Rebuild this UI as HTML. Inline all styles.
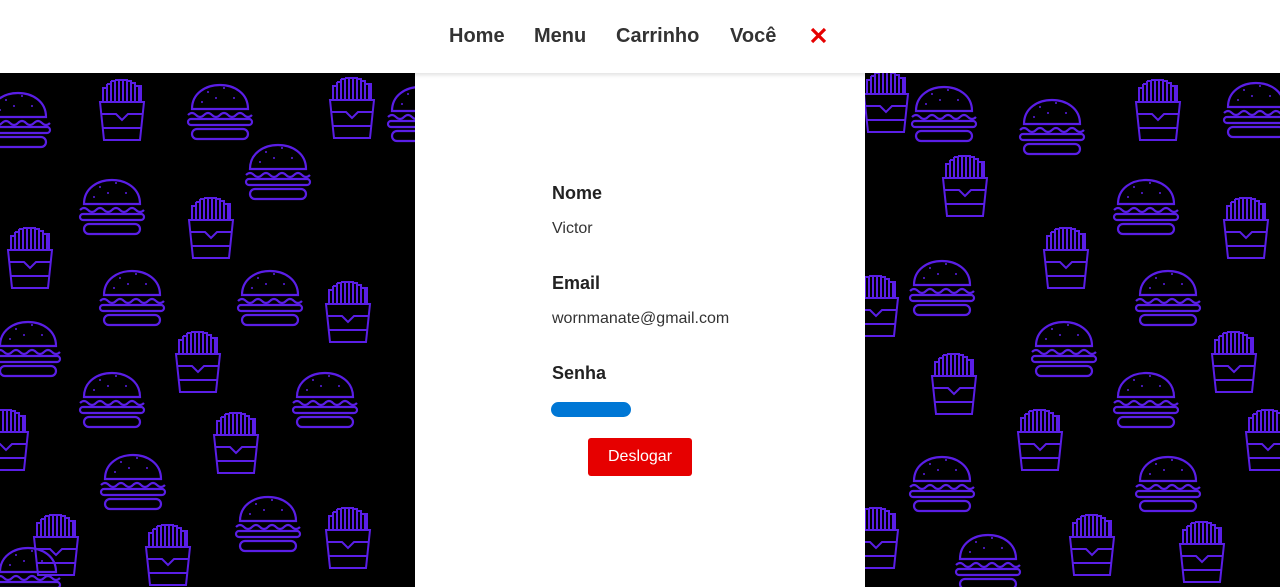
<!DOCTYPE html>
<html><head><meta charset="utf-8"><style>
*{margin:0;padding:0;box-sizing:border-box}
body{width:1280px;height:587px;overflow:hidden;background:#000;font-family:"Liberation Sans",Arial,sans-serif;position:relative}
nav{position:absolute;top:0;left:0;width:1280px;height:73px;background:#fff;box-shadow:0 2px 4px rgba(0,0,0,.12);z-index:2}
nav span{position:absolute;top:25px;font-size:20px;font-weight:bold;color:#333}
.bg{position:absolute;top:0;left:0}
.card{position:absolute;left:415px;top:73px;width:450px;height:514px;background:#fff;z-index:1}
h3{position:absolute;left:137px;font-size:18px;font-weight:bold;color:#222}
p{position:absolute;left:137px;font-size:16px;color:#333}
.pw{position:absolute;left:136px;top:329px;width:80px;height:15px;border-radius:8px;background:#0077d5}
.btn{position:absolute;left:173px;top:365px;width:104px;height:38px;background:#e60000;border-radius:3px;color:#fff;font-size:16px;text-align:center;line-height:38px}
</style></head><body>
<svg class="bg" width="1280" height="587" viewBox="0 0 1280 587">
<defs>
<g id="b" fill="none" stroke="#5a1ee6" stroke-width="2.2">
<path d="M-28 -1 C-28 -33 28 -33 28 -1 Z"/>
<path d="M-32 5 q4 -4 8 0 t8 0 t8 0 t8 0 t8 0 t8 0 t8 0 t8 0"/>
<rect x="-32" y="9" width="64" height="6" rx="3"/>
<rect x="-28" y="19" width="56" height="10" rx="5"/>
<g fill="#5a1ee6" stroke="none"><circle cx="-12" cy="-18" r="1"/><circle cx="4" cy="-22" r="1"/><circle cx="14" cy="-12" r="1"/><circle cx="-18" cy="-8" r="1"/><circle cx="-4" cy="-12" r="1"/></g>
</g>
<g id="f" fill="none" stroke="#5a1ee6" stroke-width="2">
<path d="M-19 -8 V-22 H-15 V-8 M-15 -26 H-11 V-8 M-11 -29 H-7 V-8 M-7 -30 H-3 V-8 M-3 -30 H1 V-8 M1 -30 H5 V-8 M5 -29 H9 V-8 M9 -27 H13 V-8 M13 -24 H17 V-8 M-15 -22 V-26 M-11 -26 V-29 M-7 -29 V-30 M13 -27 V-24 M17 -24 H19 V-8"/>
<path d="M-22 -8 H22 L18 30 H-18 Z"/>
<path d="M-20 4 H-6 L0 10 L6 4 H20 M-19 18 H19"/>
</g>
</defs>
<use href="#b" x="18" y="118"/><use href="#b" x="220" y="110"/><use href="#b" x="278" y="170"/><use href="#b" x="112" y="205"/><use href="#b" x="132" y="296"/><use href="#b" x="270" y="296"/><use href="#b" x="28" y="347"/><use href="#b" x="112" y="398"/><use href="#b" x="325" y="398"/><use href="#b" x="133" y="480"/><use href="#b" x="268" y="522"/><use href="#b" x="420" y="112"/><use href="#b" x="28" y="573"/>
<use href="#f" x="122" y="110"/><use href="#f" x="352" y="108"/><use href="#f" x="211" y="228"/><use href="#f" x="30" y="258"/><use href="#f" x="348" y="312"/><use href="#f" x="198" y="362"/><use href="#f" x="6" y="440"/><use href="#f" x="236" y="443"/><use href="#f" x="56" y="545"/><use href="#f" x="168" y="555"/><use href="#f" x="348" y="538"/>
<use href="#b" x="944" y="112"/><use href="#b" x="1052" y="125"/><use href="#b" x="1256" y="108"/><use href="#b" x="1146" y="205"/><use href="#b" x="942" y="286"/><use href="#b" x="1168" y="296"/><use href="#b" x="1064" y="347"/><use href="#b" x="1146" y="398"/><use href="#b" x="942" y="482"/><use href="#b" x="1168" y="482"/><use href="#b" x="988" y="560"/>
<use href="#f" x="886" y="102"/><use href="#f" x="965" y="186"/><use href="#f" x="1158" y="110"/><use href="#f" x="1246" y="228"/><use href="#f" x="1066" y="258"/><use href="#f" x="876" y="306"/><use href="#f" x="1234" y="362"/><use href="#f" x="954" y="384"/><use href="#f" x="1040" y="440"/><use href="#f" x="1268" y="440"/><use href="#f" x="1092" y="545"/><use href="#f" x="1202" y="552"/><use href="#f" x="876" y="538"/>
</svg>
<nav><span style="left:449px">Home</span><span style="left:534px">Menu</span><span style="left:616px">Carrinho</span><span style="left:730px">Você</span>
<svg style="position:absolute;left:810px;top:27px" width="17" height="17" viewBox="0 0 17 17"><path d="M2 2L15 15M15 2L2 15" stroke="#e60000" stroke-width="3.2"/></svg></nav>
<div class="card">
<h3 style="top:110px">Nome</h3><p style="top:147px">Victor</p>
<h3 style="top:200px">Email</h3><p style="top:237px">wornmanate@gmail.com</p>
<h3 style="top:290px">Senha</h3><div class="pw"></div>
<div class="btn">Deslogar</div>
</div>
</body></html>
